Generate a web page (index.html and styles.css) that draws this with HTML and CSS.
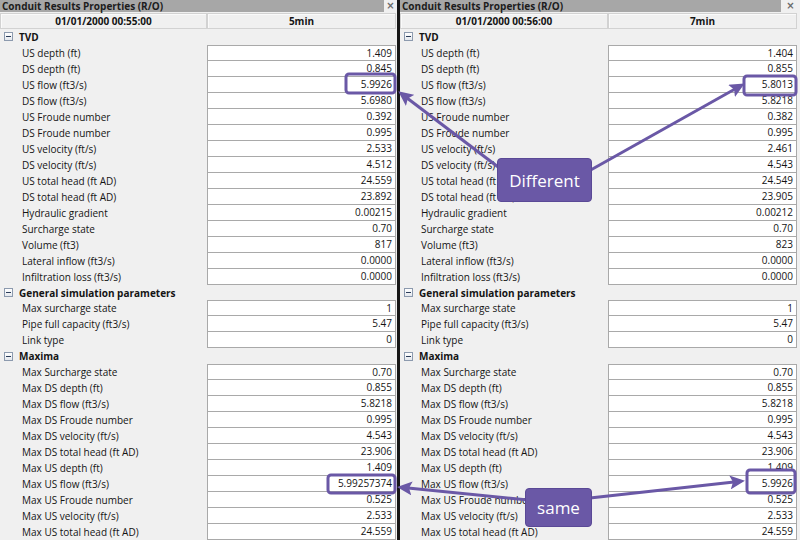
FILE: index.html
```html
<!DOCTYPE html>
<html>
<head>
<meta charset="utf-8">
<link rel="stylesheet" href="styles.css">
</head>
<body>
<div class="screen">
  <section class="panel left">
    <div class="titlebar"><div class="title">Conduit Results Properties (R/O)</div><div class="close">×</div></div>
    <div class="head"><div class="hcell">01/01/2000 00:55:00</div><div class="hcell">5min</div></div>
    <div class="sec"><span class="box"></span>TVD</div>
    <div class="row"><div class="lab">US depth (ft)</div><div class="val">1.409</div></div>
    <div class="row"><div class="lab">DS depth (ft)</div><div class="val">0.845</div></div>
    <div class="row"><div class="lab">US flow (ft3/s)</div><div class="val">5.9926</div></div>
    <div class="row"><div class="lab">DS flow (ft3/s)</div><div class="val">5.6980</div></div>
    <div class="row"><div class="lab">US Froude number</div><div class="val">0.392</div></div>
    <div class="row"><div class="lab">DS Froude number</div><div class="val">0.995</div></div>
    <div class="row"><div class="lab">US velocity (ft/s)</div><div class="val">2.533</div></div>
    <div class="row"><div class="lab">DS velocity (ft/s)</div><div class="val">4.512</div></div>
    <div class="row"><div class="lab">US total head (ft AD)</div><div class="val">24.559</div></div>
    <div class="row"><div class="lab">DS total head (ft AD)</div><div class="val">23.892</div></div>
    <div class="row"><div class="lab">Hydraulic gradient</div><div class="val">0.00215</div></div>
    <div class="row"><div class="lab">Surcharge state</div><div class="val">0.70</div></div>
    <div class="row"><div class="lab">Volume (ft3)</div><div class="val">817</div></div>
    <div class="row"><div class="lab">Lateral inflow (ft3/s)</div><div class="val">0.0000</div></div>
    <div class="row"><div class="lab">Infiltration loss (ft3/s)</div><div class="val">0.0000</div></div>
    <div class="sec"><span class="box"></span>General simulation parameters</div>
    <div class="row"><div class="lab">Max surcharge state</div><div class="val">1</div></div>
    <div class="row"><div class="lab">Pipe full capacity (ft3/s)</div><div class="val">5.47</div></div>
    <div class="row"><div class="lab">Link type</div><div class="val">0</div></div>
    <div class="sec"><span class="box"></span>Maxima</div>
    <div class="row"><div class="lab">Max Surcharge state</div><div class="val">0.70</div></div>
    <div class="row"><div class="lab">Max DS depth (ft)</div><div class="val">0.855</div></div>
    <div class="row"><div class="lab">Max DS flow (ft3/s)</div><div class="val">5.8218</div></div>
    <div class="row"><div class="lab">Max DS Froude number</div><div class="val">0.995</div></div>
    <div class="row"><div class="lab">Max DS velocity (ft/s)</div><div class="val">4.543</div></div>
    <div class="row"><div class="lab">Max DS total head (ft AD)</div><div class="val">23.906</div></div>
    <div class="row"><div class="lab">Max US depth (ft)</div><div class="val">1.409</div></div>
    <div class="row"><div class="lab">Max US flow (ft3/s)</div><div class="val">5.99257374</div></div>
    <div class="row"><div class="lab">Max US Froude number</div><div class="val">0.525</div></div>
    <div class="row"><div class="lab">Max US velocity (ft/s)</div><div class="val">2.533</div></div>
    <div class="row"><div class="lab">Max US total head (ft AD)</div><div class="val">24.559</div></div>
  </section>
  <div class="divider"></div>
  <section class="panel right">
    <div class="titlebar"><div class="title">Conduit Results Properties (R/O)</div><div class="close">×</div></div>
    <div class="head"><div class="hcell">01/01/2000 00:56:00</div><div class="hcell">7min</div></div>
    <div class="sec"><span class="box"></span>TVD</div>
    <div class="row"><div class="lab">US depth (ft)</div><div class="val">1.404</div></div>
    <div class="row"><div class="lab">DS depth (ft)</div><div class="val">0.855</div></div>
    <div class="row"><div class="lab">US flow (ft3/s)</div><div class="val">5.8013</div></div>
    <div class="row"><div class="lab">DS flow (ft3/s)</div><div class="val">5.8218</div></div>
    <div class="row"><div class="lab">US Froude number</div><div class="val">0.382</div></div>
    <div class="row"><div class="lab">DS Froude number</div><div class="val">0.995</div></div>
    <div class="row"><div class="lab">US velocity (ft/s)</div><div class="val">2.461</div></div>
    <div class="row"><div class="lab">DS velocity (ft/s)</div><div class="val">4.543</div></div>
    <div class="row"><div class="lab">US total head (ft AD)</div><div class="val">24.549</div></div>
    <div class="row"><div class="lab">DS total head (ft AD)</div><div class="val">23.905</div></div>
    <div class="row"><div class="lab">Hydraulic gradient</div><div class="val">0.00212</div></div>
    <div class="row"><div class="lab">Surcharge state</div><div class="val">0.70</div></div>
    <div class="row"><div class="lab">Volume (ft3)</div><div class="val">823</div></div>
    <div class="row"><div class="lab">Lateral inflow (ft3/s)</div><div class="val">0.0000</div></div>
    <div class="row"><div class="lab">Infiltration loss (ft3/s)</div><div class="val">0.0000</div></div>
    <div class="sec"><span class="box"></span>General simulation parameters</div>
    <div class="row"><div class="lab">Max surcharge state</div><div class="val">1</div></div>
    <div class="row"><div class="lab">Pipe full capacity (ft3/s)</div><div class="val">5.47</div></div>
    <div class="row"><div class="lab">Link type</div><div class="val">0</div></div>
    <div class="sec"><span class="box"></span>Maxima</div>
    <div class="row"><div class="lab">Max Surcharge state</div><div class="val">0.70</div></div>
    <div class="row"><div class="lab">Max DS depth (ft)</div><div class="val">0.855</div></div>
    <div class="row"><div class="lab">Max DS flow (ft3/s)</div><div class="val">5.8218</div></div>
    <div class="row"><div class="lab">Max DS Froude number</div><div class="val">0.995</div></div>
    <div class="row"><div class="lab">Max DS velocity (ft/s)</div><div class="val">4.543</div></div>
    <div class="row"><div class="lab">Max DS total head (ft AD)</div><div class="val">23.906</div></div>
    <div class="row"><div class="lab">Max US depth (ft)</div><div class="val">1.409</div></div>
    <div class="row"><div class="lab">Max US flow (ft3/s)</div><div class="val">5.9926</div></div>
    <div class="row"><div class="lab">Max US Froude number</div><div class="val">0.525</div></div>
    <div class="row"><div class="lab">Max US velocity (ft/s)</div><div class="val">2.533</div></div>
    <div class="row"><div class="lab">Max US total head (ft AD)</div><div class="val">24.559</div></div>
  </section>

  <svg class="annot" width="800" height="540" viewBox="0 0 800 540">
    <defs>
      <marker id="ah" markerUnits="userSpaceOnUse" markerWidth="16" markerHeight="14" refX="4" refY="7" orient="auto">
        <path d="M0,0 L15,7 L0,14 L3,7 Z" fill="#6a58a6"/>
      </marker>
    </defs>
    <g fill="none" stroke="#6a58a6" stroke-width="3">
      <rect x="346" y="74" width="49" height="19" rx="3"/>
      <rect x="744" y="76" width="52" height="19" rx="3"/>
      <rect x="328" y="475" width="67" height="18" rx="3"/>
      <rect x="747" y="470" width="48" height="23" rx="3"/>
      <line x1="510" y1="176" x2="407" y2="98" marker-end="url(#ah)"/>
      <line x1="580" y1="176" x2="735" y2="89" marker-end="url(#ah)"/>
      <line x1="528" y1="500" x2="408" y2="488" marker-end="url(#ah)"/>
      <line x1="590" y1="498" x2="734" y2="482" marker-end="url(#ah)"/>
    </g>
  </svg>
  <div class="callout different">Different</div>
  <div class="callout same">same</div>
</div>
</body>
</html>
```
FILE: styles.css
```css
html, body {
  margin: 0;
  padding: 0;
}
body {
  background: #f0f0f0;
  font-family: "Open Sans", "Noto Sans", sans-serif;
  font-size: 10px;
  color: #141414;
}
.screen {
  position: relative;
  display: flex;
  width: 800px;
  height: 540px;
  overflow: hidden;
  background: #f0f0f0;
}
.panel {
  display: flex;
  flex-direction: column;
}
.panel.left {
  width: 397px;
}
.panel.right {
  width: 400px;
}
.divider {
  width: 3px;
  background: #161616;
}
.titlebar {
  display: flex;
  height: 12px;
  margin-bottom: 1px;
}
.title {
  flex: 1;
  background: #a7a7a7;
  font-weight: 700;
  line-height: 12px;
  padding-left: 2px;
  white-space: nowrap;
  color: #1c1c1c;
}
.left .close {
  width: 13px;
}
.right .close {
  width: 19px;
}
.close {
  display: flex;
  align-items: center;
  justify-content: center;
  font-family: "DejaVu Sans", sans-serif;
  font-size: 10px;
  line-height: 10px;
  font-weight: 700;
  color: #6a6a6a;
}
.head {
  display: grid;
  grid-template-columns: 207px 189px;
  height: 16px;
}
.right .head,
.right .row {
  grid-template-columns: 208px 189px;
}
.hcell {
  box-sizing: border-box;
  border: 1px solid #d2d2d2;
  background: #f0f0f0;
  box-shadow: inset 1px 1px 0 #fafafa;
  text-align: center;
  font-weight: 700;
  line-height: 14px;
  white-space: nowrap;
}
.sec {
  display: flex;
  align-items: center;
  height: 16px;
  font-weight: 700;
  white-space: nowrap;
}
.box {
  position: relative;
  box-sizing: border-box;
  width: 9px;
  height: 9px;
  margin-left: 4px;
  margin-right: 6px;
  border: 1px solid #8c9aae;
  background: linear-gradient(#ffffff, #e4e8ee);
}
.box::after {
  content: "";
  position: absolute;
  left: 1px;
  top: 3px;
  width: 5px;
  height: 1px;
  background: #2b3d5a;
}
.row {
  display: grid;
  grid-template-columns: 207px 189px;
  height: 16px;
}
.lab {
  padding-left: 22px;
  line-height: 16px;
  white-space: nowrap;
}
.right .lab {
  padding-left: 21px;
}
.val {
  box-sizing: border-box;
  background: #fff;
  border: 1px solid #a9a9a9;
  border-top: 0;
  text-align: right;
  padding-right: 3px;
  line-height: 15px;
  white-space: nowrap;
}
.sec + .row .val {
  border-top: 1px solid #a9a9a9;
  line-height: 14px;
}
.annot {
  position: absolute;
  left: 0;
  top: 0;
  pointer-events: none;
}
.callout {
  position: absolute;
  box-sizing: border-box;
  display: flex;
  align-items: center;
  justify-content: center;
  background: #6a58a6;
  border: 1px solid #5a4996;
  border-radius: 4px;
  color: #fff;
  font-family: "Open Sans", "Noto Sans", sans-serif;
  font-size: 17px;
}
.callout.different {
  left: 497px;
  top: 158px;
  width: 95px;
  height: 44px;
}
.callout.same {
  left: 525px;
  top: 488px;
  width: 67px;
  height: 39px;
}
```
